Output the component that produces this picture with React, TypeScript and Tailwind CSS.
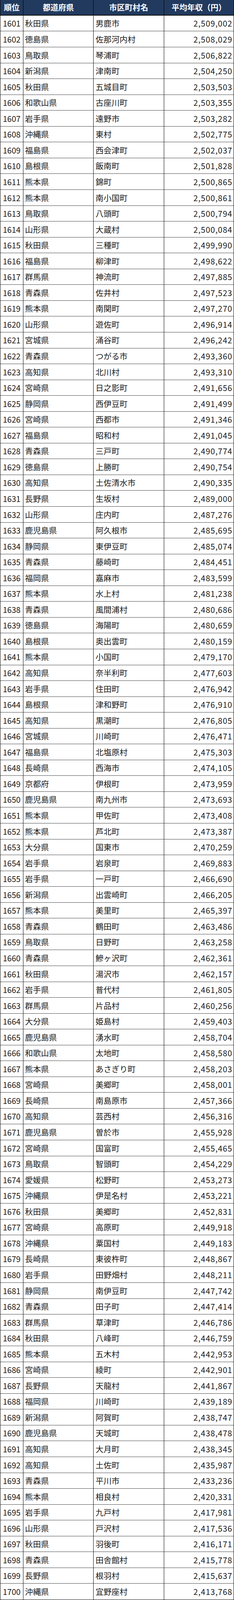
import React from "react"

type Row = [number, string, string, string]

const rows: Row[] = [
  [1601, "秋田県", "男鹿市", "2,509,002"],
  [1602, "徳島県", "佐那河内村", "2,508,029"],
  [1603, "鳥取県", "琴浦町", "2,506,822"],
  [1604, "新潟県", "津南町", "2,504,250"],
  [1605, "秋田県", "五城目町", "2,503,503"],
  [1606, "和歌山県", "古座川町", "2,503,355"],
  [1607, "岩手県", "遠野市", "2,503,282"],
  [1608, "沖縄県", "東村", "2,502,775"],
  [1609, "福島県", "西会津町", "2,502,037"],
  [1610, "島根県", "飯南町", "2,501,828"],
  [1611, "熊本県", "錦町", "2,500,865"],
  [1612, "熊本県", "南小国町", "2,500,861"],
  [1613, "鳥取県", "八頭町", "2,500,794"],
  [1614, "山形県", "大蔵村", "2,500,084"],
  [1615, "秋田県", "三種町", "2,499,990"],
  [1616, "福島県", "柳津町", "2,498,622"],
  [1617, "群馬県", "神流町", "2,497,885"],
  [1618, "青森県", "佐井村", "2,497,523"],
  [1619, "熊本県", "南関町", "2,497,270"],
  [1620, "山形県", "遊佐町", "2,496,914"],
  [1621, "宮城県", "涌谷町", "2,496,242"],
  [1622, "青森県", "つがる市", "2,493,360"],
  [1623, "高知県", "北川村", "2,493,310"],
  [1624, "宮崎県", "日之影町", "2,491,656"],
  [1625, "静岡県", "西伊豆町", "2,491,499"],
  [1626, "宮崎県", "西都市", "2,491,346"],
  [1627, "福島県", "昭和村", "2,491,045"],
  [1628, "青森県", "三戸町", "2,490,774"],
  [1629, "徳島県", "上勝町", "2,490,754"],
  [1630, "高知県", "土佐清水市", "2,490,335"],
  [1631, "長野県", "生坂村", "2,489,000"],
  [1632, "山形県", "庄内町", "2,487,276"],
  [1633, "鹿児島県", "阿久根市", "2,485,695"],
  [1634, "静岡県", "東伊豆町", "2,485,074"],
  [1635, "青森県", "藤崎町", "2,484,451"],
  [1636, "福岡県", "嘉麻市", "2,483,599"],
  [1637, "熊本県", "水上村", "2,481,238"],
  [1638, "青森県", "風間浦村", "2,480,686"],
  [1639, "徳島県", "海陽町", "2,480,659"],
  [1640, "島根県", "奥出雲町", "2,480,159"],
  [1641, "熊本県", "小国町", "2,479,170"],
  [1642, "高知県", "奈半利町", "2,477,603"],
  [1643, "岩手県", "住田町", "2,476,942"],
  [1644, "島根県", "津和野町", "2,476,910"],
  [1645, "高知県", "黒潮町", "2,476,805"],
  [1646, "宮城県", "川崎町", "2,476,471"],
  [1647, "福島県", "北塩原村", "2,475,303"],
  [1648, "長崎県", "西海市", "2,474,105"],
  [1649, "京都府", "伊根町", "2,473,959"],
  [1650, "鹿児島県", "南九州市", "2,473,693"],
  [1651, "熊本県", "甲佐町", "2,473,408"],
  [1652, "熊本県", "芦北町", "2,473,387"],
  [1653, "大分県", "国東市", "2,470,259"],
  [1654, "岩手県", "岩泉町", "2,469,883"],
  [1655, "岩手県", "一戸町", "2,466,690"],
  [1656, "新潟県", "出雲崎町", "2,466,205"],
  [1657, "熊本県", "美里町", "2,465,397"],
  [1658, "青森県", "鶴田町", "2,463,486"],
  [1659, "鳥取県", "日野町", "2,463,258"],
  [1660, "青森県", "鰺ヶ沢町", "2,462,361"],
  [1661, "秋田県", "湯沢市", "2,462,157"],
  [1662, "岩手県", "普代村", "2,461,805"],
  [1663, "群馬県", "片品村", "2,460,256"],
  [1664, "大分県", "姫島村", "2,459,403"],
  [1665, "鹿児島県", "湧水町", "2,458,704"],
  [1666, "和歌山県", "太地町", "2,458,580"],
  [1667, "熊本県", "あさぎり町", "2,458,203"],
  [1668, "宮崎県", "美郷町", "2,458,001"],
  [1669, "長崎県", "南島原市", "2,457,366"],
  [1670, "高知県", "芸西村", "2,456,316"],
  [1671, "鹿児島県", "曽於市", "2,455,928"],
  [1672, "宮崎県", "国富町", "2,455,465"],
  [1673, "鳥取県", "智頭町", "2,454,229"],
  [1674, "愛媛県", "松野町", "2,453,273"],
  [1675, "沖縄県", "伊是名村", "2,453,221"],
  [1676, "秋田県", "美郷町", "2,452,831"],
  [1677, "宮崎県", "高原町", "2,449,918"],
  [1678, "沖縄県", "粟国村", "2,449,183"],
  [1679, "長崎県", "東彼杵町", "2,448,867"],
  [1680, "岩手県", "田野畑村", "2,448,211"],
  [1681, "静岡県", "南伊豆町", "2,447,742"],
  [1682, "青森県", "田子町", "2,447,414"],
  [1683, "群馬県", "草津町", "2,446,786"],
  [1684, "秋田県", "八峰町", "2,446,759"],
  [1685, "熊本県", "五木村", "2,442,953"],
  [1686, "宮崎県", "綾町", "2,442,901"],
  [1687, "長野県", "天龍村", "2,441,867"],
  [1688, "福岡県", "川崎町", "2,439,189"],
  [1689, "新潟県", "阿賀町", "2,438,747"],
  [1690, "鹿児島県", "天城町", "2,438,478"],
  [1691, "高知県", "大月町", "2,438,345"],
  [1692, "高知県", "土佐町", "2,435,987"],
  [1693, "青森県", "平川市", "2,433,236"],
  [1694, "熊本県", "相良村", "2,420,331"],
  [1695, "岩手県", "九戸村", "2,417,981"],
  [1696, "山形県", "戸沢村", "2,417,536"],
  [1697, "秋田県", "羽後町", "2,416,171"],
  [1698, "青森県", "田舎館村", "2,415,778"],
  [1699, "長野県", "根羽村", "2,415,637"],
  [1700, "沖縄県", "宜野座村", "2,413,768"],
]

const cell = "min-h-0 overflow-hidden flex items-center whitespace-nowrap"
const head = `${cell} justify-center bg-[#213a5e] text-white font-bold text-[20px] border-b-2 border-b-[#111]`

// the table fills the viewport: header + 100 equal rows
export default function App() {
  return (
    <div className="w-[600px] h-screen overflow-hidden grid grid-cols-[59px_180px_181px_1fr] grid-rows-[minmax(0,43fr)_repeat(100,minmax(0,43.65fr))] bg-white border-l border-r border-b border-black font-['Noto_Sans_CJK_JP','Noto_Sans',sans-serif] text-[#1a1a1a] text-[20.5px] leading-none">
      <div className={`${head} border-r border-r-black`}>順位</div>
      <div className={`${head} border-r border-r-black`}>都道府県</div>
      <div className={`${head} border-r border-r-black`}>市区町村名</div>
      <div className={head}>平均年収（円）</div>
      {rows.map(([rank, pref, city, income], i) => {
        const line = i < rows.length - 1 ? "border-b border-b-[#474747]" : ""
        return (
          <React.Fragment key={rank}>
            <div className={`${cell} justify-center border-r border-r-black ${line}`}>{rank}</div>
            <div className={`${cell} pl-[4px] border-r border-r-black ${line}`}>{pref}</div>
            <div className={`${cell} pl-[5px] border-r border-r-black ${line}`}>{city}</div>
            <div className={`${cell} justify-end pr-[3px] tracking-[1px] ${line}`}>{income}</div>
          </React.Fragment>
        )
      })}
    </div>
  )
}
